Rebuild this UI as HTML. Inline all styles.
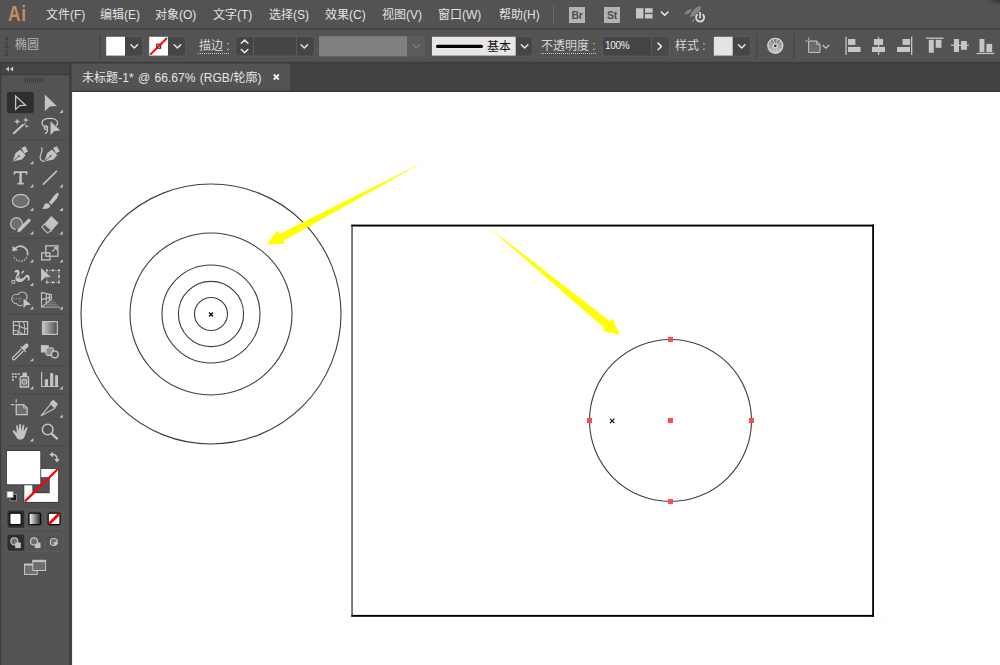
<!DOCTYPE html>
<html lang="zh">
<head>
<meta charset="utf-8">
<title>Adobe Illustrator</title>
<style>
*{box-sizing:border-box;margin:0;padding:0}
html,body{width:1000px;height:665px;overflow:hidden;background:#535353}
body{position:relative;font-family:"Liberation Sans","Noto Sans CJK SC",sans-serif;font-size:12px;color:#dedede}
.abs{position:absolute}
.t{position:absolute;z-index:5;white-space:nowrap;line-height:16px;height:16px}
#menubar{left:0;top:0;width:1000px;height:30px;background:#535353}
#ctrlbar{left:0;top:30px;width:1000px;height:33px;background:#535353;border-bottom:1px solid #3c3c3c}
#tabbar{left:72px;top:63px;width:928px;height:29px;background:#424242}
#tab{left:72px;top:63px;width:218px;height:29px;background:#535353}
#canvas{left:72px;top:92px;width:928px;height:573px;background:#fff}
#tools{left:0;top:63px;width:72px;height:602px;background:#535353}
#toolhead{left:0;top:63px;width:70px;height:12px;background:#454545}
.menu{top:7px;font-size:12px;color:#e2e2e2}
.lbl{top:38px;font-size:12px;color:#d6d6d6}
.dd{position:absolute;top:37px;height:19px;background:#464646;border-radius:0 2px 2px 0}
.fld{position:absolute;top:37px;height:19px;background:#454545}
.cj{display:inline-block;vertical-align:top;height:16px;overflow:hidden;font-family:"Liberation Sans","Noto Sans CJK SC",sans-serif}
</style>
</head>
<body>

<!-- ===== menu bar ===== -->
<div id="menubar" class="abs"></div>
<div class="t" style="left:8.2px;top:0;height:28px;line-height:28px;font-size:22.5px;font-weight:bold;letter-spacing:0.8px;color:#c88d61;transform:scaleX(0.77);transform-origin:0 0">Ai</div>
<div class="t menu" style="left:46px"><span class="cj" style="width:24px">文件</span>(F)</div>
<div class="t menu" style="left:100px"><span class="cj" style="width:24px">编辑</span>(E)</div>
<div class="t menu" style="left:155px"><span class="cj" style="width:24px">对象</span>(O)</div>
<div class="t menu" style="left:213px"><span class="cj" style="width:24px">文字</span>(T)</div>
<div class="t menu" style="left:269px"><span class="cj" style="width:24px">选择</span>(S)</div>
<div class="t menu" style="left:325px"><span class="cj" style="width:24px">效果</span>(C)</div>
<div class="t menu" style="left:382px"><span class="cj" style="width:24px">视图</span>(V)</div>
<div class="t menu" style="left:438px"><span class="cj" style="width:24px">窗口</span>(W)</div>
<div class="t menu" style="left:499px"><span class="cj" style="width:24px">帮助</span>(H)</div>
<div class="abs" style="left:553px;top:5px;width:1px;height:19px;background:#6a6a6a"></div>
<div class="abs" style="left:569px;top:7px;width:16px;height:16px;background:#b3b3b3;color:#4e4e4e;font-size:10.5px;font-weight:bold;letter-spacing:-0.3px;line-height:16px;text-align:center;z-index:5">Br</div>
<div class="abs" style="left:604px;top:7px;width:16px;height:16px;background:#b3b3b3;color:#4e4e4e;font-size:10.5px;font-weight:bold;letter-spacing:-0.3px;line-height:16px;text-align:center;z-index:5">St</div>

<!-- ===== control bar ===== -->
<div id="ctrlbar" class="abs"></div>
<div class="t" style="left:15px;top:37px;font-size:12px;color:#b4b4b4"><span class="cj" style="width:24px">椭圆</span></div>
<div class="t lbl" style="left:199px"><span class="cj" style="width:24px">描边</span> :</div>
<div class="t lbl" style="left:541px"><span class="cj" style="width:48px">不透明度</span> :</div>
<div class="t lbl" style="left:675px"><span class="cj" style="width:24px">样式</span> :</div>

<div class="t" style="left:487px;top:38.5px;font-size:12px;color:#111"><span class="cj" style="width:24px">基本</span></div>
<div class="t" style="left:605px;top:38px;font-size:10px;color:#f0f0f0;letter-spacing:-0.3px">100%</div>

<!-- ===== tab bar ===== -->
<div id="tabbar" class="abs"></div>
<div id="tab" class="abs"></div>
<div class="t" style="left:82px;top:70px;font-size:12px;color:#e6e6e6;letter-spacing:0.05px;word-spacing:0.9px"><span class="cj" style="width:36.15px">未标题</span>-1* @ 66.67% (RGB/</div>
<div class="t" style="left:233.4px;top:70px;font-size:12px;color:#e6e6e6"><span class="cj" style="width:24px">轮廓</span></div>
<div class="t" style="left:257.5px;top:70px;font-size:12px;color:#e6e6e6">)</div>

<!-- ===== canvas ===== -->
<div id="canvas" class="abs"></div>

<!-- ===== tools panel ===== -->
<div id="tools" class="abs"></div>
<div id="toolhead" class="abs"></div>

<!-- ===== master svg overlay (all vector art) ===== -->
<svg class="abs" style="left:0;top:0" width="1000" height="665" viewBox="0 0 1000 665">
<defs><radialGradient id="crn" cx="1" cy="0" r="1"><stop offset="0" stop-color="#363636"/><stop offset="0.55" stop-color="#454545" stop-opacity="0.8"/><stop offset="1" stop-color="#535353" stop-opacity="0"/></radialGradient></defs>
<rect x="982" y="0" width="18" height="7" fill="url(#crn)"/>
<g fill="none" stroke="#f1f1f1" stroke-width="0.8"><circle cx="872.3" cy="623" r="1.7"/><path d="M884.2,624 C884.4,622.2 885.4,621.4 886.8,621.6"/><path d="M882.6,613.4 L883.6,614.6"/></g>
<!-- canvas drawing -->
<g id="drawing">
  <!-- artboard rectangle -->
  <rect x="351.2" y="224.6" width="1.7" height="392.2" fill="#666"/>
  <rect x="351.4" y="224.6" width="522.6" height="1.9" fill="#000"/>
  <rect x="351.4" y="614.9" width="522.6" height="1.9" fill="#000"/>
  <rect x="872.2" y="224.6" width="1.8" height="392.2" fill="#000"/>
  <!-- concentric circles -->
  <g fill="none" stroke="#404040" stroke-width="1.12">
    <circle cx="211" cy="314" r="130"/>
    <circle cx="211" cy="314" r="81"/>
    <circle cx="211" cy="314" r="49"/>
    <circle cx="211" cy="314" r="32.6"/>
    <circle cx="211" cy="314" r="16.5"/>
    <circle cx="670.5" cy="420.5" r="81"/>
  </g>
  <!-- centre marks -->
  <path d="M209 312.5l4 4M213 312.5l-4 4" stroke="#000" stroke-width="1.15" fill="none"/>
  <path d="M610 418.6l4.4 4.4M614.4 418.6l-4.4 4.4" stroke="#111" stroke-width="1.1" fill="none"/>
  <!-- yellow arrows -->
  <polygon points="424,161.7 279.4,234.1 277.1,230.7 266.7,244.6 284.9,243.7 283.3,240.9" fill="#ffff00"/>
  <polygon points="488,226.7 609.5,321 612.5,318.8 619.7,334.8 602.5,330.7 604.5,328.3" fill="#ffff00"/>
  <!-- anchors -->
  <g fill="#ff4c4c" shape-rendering="crispEdges">
    <rect x="668" y="337" width="5" height="5"/>
    <rect x="668" y="499" width="5" height="5"/>
    <rect x="587" y="418" width="5" height="5"/>
    <rect x="749" y="418" width="5" height="5"/>
    <rect x="668" y="418" width="5" height="5"/>
  </g>
</g>
<!-- control bar widgets -->
<defs>
  <path id="chv" d="M-3.3,-1.7 L0,1.6 L3.3,-1.7" fill="none" stroke-width="1.5" stroke-linecap="round" stroke-linejoin="round"/>
</defs>
<g id="ctrl">
  <!-- grip -->
  <g fill="#3b3b3b">
    <rect x="5" y="37" width="3" height="1"/><rect x="5" y="39" width="3" height="1"/><rect x="5" y="41" width="3" height="1"/><rect x="5" y="43" width="3" height="1"/><rect x="5" y="45" width="3" height="1"/><rect x="5" y="47" width="3" height="1"/><rect x="5" y="49" width="3" height="1"/><rect x="5" y="51" width="3" height="1"/><rect x="5" y="53" width="3" height="1"/><rect x="5" y="55" width="3" height="1"/>
  </g>
  <rect x="99.1" y="34.5" width="1.6" height="24" fill="#484848"/>
  <!-- fill swatch -->
  <rect x="105.7" y="36.3" width="37.3" height="19.8" rx="3" fill="#464646" stroke="#5d5d5d" stroke-width="1"/>
  <rect x="106.2" y="36.8" width="18.8" height="18.8" fill="#fff"/>
  <use href="#chv" x="134.3" y="46.4" stroke="#e6e6e6"/>
  <!-- stroke swatch -->
  <rect x="148.7" y="36.3" width="37.3" height="19.8" rx="3" fill="#464646" stroke="#5d5d5d" stroke-width="1"/>
  <rect x="149.2" y="36.8" width="18.8" height="18.8" fill="#fff"/>
  <rect x="156.7" y="44.2" width="4" height="4" fill="none" stroke="#111" stroke-width="1"/>
  <path d="M150.2,54.6 L167,38" stroke="#ff0000" stroke-width="2" fill="none"/>
  <use href="#chv" x="177.4" y="46.4" stroke="#e6e6e6"/>
  <!-- dotted underline for stroke label -->
  <path d="M198,53.5 H230" stroke="#c8c8c8" stroke-width="1" stroke-dasharray="1 1" fill="none" shape-rendering="crispEdges"/>
  <!-- stroke weight -->
  <rect x="235.3" y="36.3" width="79" height="19.8" rx="3" fill="#454545" stroke="#5d5d5d" stroke-width="1"/>
  <rect x="253" y="36.8" width="1" height="18.8" fill="#5a5a5a"/>
  <rect x="296" y="36.8" width="1" height="18.8" fill="#5a5a5a"/>
  <use href="#chv" x="244.6" y="41.6" stroke="#e6e6e6" transform="rotate(180 244.6 41.6)"/>
  <use href="#chv" x="244.6" y="51.2" stroke="#e6e6e6"/>
  <use href="#chv" x="304.3" y="46.4" stroke="#e6e6e6"/>
  <!-- variable width profile (disabled) -->
  <rect x="407" y="36.3" width="18.3" height="20" rx="2" fill="#5b5b5b"/>
  <rect x="319" y="36.2" width="88" height="20.2" fill="#808080"/>
  <use href="#chv" x="416.4" y="46.4" stroke="#7c7c7c"/>
  <!-- brush definition -->
  <rect x="431.5" y="36.3" width="101.3" height="19.8" rx="3" fill="#464646" stroke="#5d5d5d" stroke-width="1"/>
  <rect x="432" y="36.8" width="83.7" height="18.8" fill="#e6e6e6"/>
  <path d="M437.6,46.4 H481.4" stroke="#000" stroke-width="3.2" stroke-linecap="round" fill="none"/>
  <use href="#chv" x="524.6" y="46.4" stroke="#e6e6e6"/>
  <!-- opacity -->
  <path d="M541,53.5 H597" stroke="#c8c8c8" stroke-width="1" stroke-dasharray="1 1" fill="none" shape-rendering="crispEdges"/>
  <rect x="602.3" y="36.3" width="67.2" height="19.8" rx="3" fill="#444444" stroke="#5d5d5d" stroke-width="1"/>
  <rect x="651" y="36.8" width="1" height="18.8" fill="#5a5a5a"/>
  <rect x="652" y="36.8" width="17" height="18.8" rx="2" fill="#494949"/>
  <use href="#chv" x="659.8" y="46.4" stroke="#e6e6e6" transform="rotate(-90 659.8 46.4)"/>
  <!-- style -->
  <rect x="713.4" y="36.3" width="37.3" height="19.8" rx="3" fill="#464646" stroke="#5d5d5d" stroke-width="1"/>
  <rect x="713.9" y="36.8" width="18.8" height="18.8" fill="#e4e4e4"/>
  <use href="#chv" x="741.7" y="46.4" stroke="#e6e6e6"/>
  <rect x="755.9" y="34" width="1.6" height="24.5" fill="#484848"/>
  <rect x="793.2" y="34" width="1.6" height="24.5" fill="#484848"/>
</g>
<!-- menubar icons -->
<g id="mbicons">
  <rect x="636" y="8.2" width="7.4" height="10.3" fill="#c6c6c6"/>
  <rect x="645" y="8.2" width="7.6" height="4.6" fill="#c6c6c6"/>
  <rect x="645" y="14.1" width="7.6" height="4.4" fill="#c6c6c6"/>
  <use href="#chv" x="664.7" y="13.7" stroke="#ececec"/>
  <!-- rocket (dim) -->
  <g fill="#848484">
    <path d="M701.2,5.8 Q692.8,7.4 689.8,16.9 Q700.4,16.4 701.2,5.8 Z"/>
    <path d="M692,8.9 Q686.2,9.2 684.4,14.5 Q690.2,14.4 692,8.9 Z"/>
    <path d="M694.6,18 Q692,19.8 691.8,22.7 Q694.8,21.6 694.6,18 Z"/>
  </g>
  <!-- power -->
  <circle cx="700.1" cy="17.5" r="5.6" fill="#535353"/>
  <path d="M697.61,14.31 A4.05,4.05 0 1 0 702.59,14.31" fill="none" stroke="#d4d4d4" stroke-width="1.9"/>
  <path d="M700.1,12.1 V18.3" stroke="#d4d4d4" stroke-width="1.8" fill="none"/>
</g>
<!-- control bar right icons -->
<defs>
  <linearGradient id="wheelg" gradientUnits="userSpaceOnUse" x1="0" y1="38.8" x2="0" y2="52.8"><stop offset="0" stop-color="#7e7e7e"/><stop offset="0.5" stop-color="#9a9a9a"/><stop offset="1" stop-color="#c2c2c2"/></linearGradient>
</defs>
<g id="ctrlright">
  <circle cx="775.3" cy="45.8" r="8.1" fill="#d8d8d8"/>
  <path d="M776.29,43.29L777.83,39.38A6.9,6.9 0 0 1 780.62,41.41L777.38,44.08ZM777.58,44.35L781.12,42.09A6.9,6.9 0 0 1 782.19,45.38L777.99,45.64ZM777.99,45.96L782.19,46.22A6.9,6.9 0 0 1 781.12,49.51L777.58,47.25ZM777.38,47.52L780.62,50.19A6.9,6.9 0 0 1 777.83,52.22L776.29,48.31ZM775.98,48.41L777.03,52.48A6.9,6.9 0 0 1 773.57,52.48L774.62,48.41ZM774.31,48.31L772.77,52.22A6.9,6.9 0 0 1 769.98,50.19L773.22,47.52ZM773.02,47.25L769.48,49.51A6.9,6.9 0 0 1 768.41,46.22L772.61,45.96ZM772.61,45.64L768.41,45.38A6.9,6.9 0 0 1 769.48,42.09L773.02,44.35ZM773.22,44.08L769.98,41.41A6.9,6.9 0 0 1 772.77,39.38L774.31,43.29ZM774.62,43.19L773.57,39.12A6.9,6.9 0 0 1 777.03,39.12L775.98,43.19Z" fill="url(#wheelg)"/>
  <circle cx="775.3" cy="45.8" r="1.35" fill="#363636"/>
  <!-- artboard -->
  <path d="M808.6,41 H816.6 L820,44.4 V52.4 H808.6 Z" fill="#6c6c6c" stroke="#c8c8c8" stroke-width="1"/>
  <path d="M816.6,41 V44.4 H820" fill="none" stroke="#c8c8c8" stroke-width="0.8"/>
  <path d="M808.8,37.6 V39.9 M805.3,41 H807.6" stroke="#c8c8c8" stroke-width="1" fill="none"/>
  <path d="M822.6,45 L825.9,48.2 L829.2,45" fill="none" stroke="#c8c8c8" stroke-width="1.2"/>
  <g fill="#c6c6c6">
    <!-- align left -->
    <rect x="845.4" y="36.8" width="1.3" height="18.2"/><rect x="848" y="39" width="7.4" height="5.9"/><rect x="848" y="46.9" width="12.6" height="5.1"/>
    <!-- align h-center -->
    <rect x="877.9" y="36.8" width="1.3" height="18.2"/><rect x="873.9" y="39" width="9.2" height="5.9"/><rect x="872" y="46.9" width="13" height="5.1"/>
    <!-- align right -->
    <rect x="911" y="36.8" width="1.3" height="18.2"/><rect x="902.5" y="39" width="7.5" height="5.9"/><rect x="897" y="46.9" width="13" height="5.1"/>
    <!-- align top -->
    <rect x="925.9" y="37.5" width="17.6" height="1.3"/><rect x="928.8" y="39.8" width="5" height="12.9"/><rect x="935.7" y="39.8" width="5.8" height="8"/>
    <!-- align v-center -->
    <rect x="950.9" y="44.6" width="17.9" height="1.3"/><rect x="953.9" y="39" width="5.1" height="13"/><rect x="961" y="41" width="5.9" height="8.8"/>
    <!-- align bottom -->
    <rect x="976.6" y="52.8" width="17.6" height="1.3"/><rect x="979.5" y="39" width="4.9" height="13"/><rect x="986.4" y="43.9" width="5.8" height="8.1"/>
  </g>
</g>
<path d="M273.8,74.5 L278.8,79.5 M278.8,74.5 L273.8,79.5" stroke="#f4f4f4" stroke-width="1.9" fill="none"/>
<rect x="72" y="90.6" width="928" height="1.3" fill="#3b3b3b"/>
<!-- tools panel -->
<g id="toolpanel">
  <rect x="0" y="61.8" width="1000" height="1.8" fill="#3c3c3c"/>
  <rect x="0" y="28.45" width="1000" height="1.25" fill="#3d3d3d"/>
  <rect x="0" y="63" width="1.2" height="602" fill="#3e3e3e"/>
  <rect x="69.2" y="63" width="1.9" height="602" fill="#3b3b3b"/><rect x="71.1" y="63" width="1" height="602" fill="#464646"/>
  <rect x="1.2" y="74" width="68" height="1.1" fill="#3a3a3a"/>
  <path d="M9,66.7 V71.4 L5.8,69.05 Z M13.1,66.7 V71.4 L9.9,69.05 Z" fill="#d2d2d2"/>
  <g fill="#3a3a3a"><rect x="25" y="78" width="1" height="4.2"/><rect x="27" y="78" width="1" height="4.2"/><rect x="29" y="78" width="1" height="4.2"/><rect x="31" y="78" width="1" height="4.2"/><rect x="33" y="78" width="1" height="4.2"/><rect x="35" y="78" width="1" height="4.2"/><rect x="37" y="78" width="1" height="4.2"/><rect x="39" y="78" width="1" height="4.2"/><rect x="41" y="78" width="1" height="4.2"/><rect x="43" y="78" width="1" height="4.2"/></g>
  <g fill="#494949"><rect x="6" y="139.5" width="58.5" height="1"/><rect x="6" y="237.8" width="58.5" height="1"/><rect x="6" y="313.4" width="58.5" height="1"/><rect x="6" y="365.1" width="58.5" height="1"/><rect x="6" y="393.5" width="58.5" height="1"/><rect x="6" y="445.1" width="58.5" height="1"/></g>
  <g fill="#c4c4c4"><path d="M29.9,164.2 H33.3 V160.79999999999998 Z"/><path d="M29.9,187.4 H33.3 V184.0 Z"/><path d="M59.4,187.4 H62.8 V184.0 Z"/><path d="M29.9,211 H33.3 V207.6 Z"/><path d="M59.4,211 H62.8 V207.6 Z"/><path d="M29.9,234.5 H33.3 V231.1 Z"/><path d="M59.4,234.5 H62.8 V231.1 Z"/><path d="M29.9,262.6 H33.3 V259.20000000000005 Z"/><path d="M59.4,262.6 H62.8 V259.20000000000005 Z"/><path d="M29.9,286 H33.3 V282.6 Z"/><path d="M29.9,309.6 H33.3 V306.20000000000005 Z"/><path d="M59.4,309.6 H62.8 V306.20000000000005 Z"/><path d="M29.9,361.3 H33.3 V357.90000000000003 Z"/><path d="M29.9,389.5 H33.3 V386.1 Z"/><path d="M59.4,389.5 H62.8 V386.1 Z"/><path d="M59.4,417.8 H62.8 V414.40000000000003 Z"/><path d="M29.9,441.5 H33.3 V438.1 Z"/><path d="M59.4,113 H62.8 V109.6 Z"/></g>

  <!-- selection (active) -->
  <rect x="6.4" y="91.3" width="28" height="22.4" rx="3.2" fill="#5a5a5a"/>
  <rect x="6.9" y="91.8" width="27" height="21.4" rx="2.8" fill="#2e2e2e"/>
  <path d="M15.6,96.1 V109.4 L19.9,105.6 L25.5,105.2 Z" fill="none" stroke="#c4c4c4" stroke-width="1.3" stroke-linejoin="miter"/>
  <!-- direct selection -->
  <path d="M44.8,94.5 V111.3 L49.8,106.4 L56.8,105.9 Z" fill="#c4c4c4"/>
  <!-- magic wand -->
  <path d="M13.3,133.7 L23.6,124.3" stroke="#c4c4c4" stroke-width="2.1" stroke-linecap="butt" fill="none"/>
  <path d="M17.2,118.3 L18,120.8 L20.5,121.6 L18,122.4 L17.2,124.9 L16.4,122.4 L13.9,121.6 L16.4,120.8 Z" fill="#c4c4c4"/>
  <path d="M25.8,117 L26.5,119.3 L28.8,120 L26.5,120.7 L25.8,123 L25.1,120.7 L22.8,120 L25.1,119.3 Z" fill="#c4c4c4"/>
  <path d="M25.6,124.8 L28.6,126.3 L25.6,127.8 Z" fill="#c4c4c4"/>
  <path d="M24.2,123.4 L25.4,124.6" stroke="#c4c4c4" stroke-width="1.2" fill="none"/>
  <!-- lasso -->
  <g fill="none" stroke="#c4c4c4" stroke-width="1.3">
    <path d="M47.5,127.3 C43.5,126.6 41.8,124.6 42,122.6 C42.4,119.6 46,118.3 49.9,118.3 C54,118.3 57.6,120 57.6,123 C57.6,124.2 57,125.2 56,126"/>
    <circle cx="45.9" cy="127.7" r="1.8"/>
    <path d="M47.3,129 C48,131 47,133 44.8,133.6"/>
  </g>
  <path d="M50.5,121.2 V134.9 L54.6,130.9 L60.3,130.4 Z" fill="#c4c4c4"/>

  <!-- pen -->
  <g id="pen">
    <path d="M12.5,161.6 L15.6,153 L20.3,149.6 L25.6,154.9 L22,159.4 Z" fill="#c4c4c4"/>
    <path d="M21.2,148.6 L24.7,146.1 L28.3,150.9 L24.8,153.3 Z" fill="#c4c4c4" transform="rotate(8 24.7 149.7)"/>
    <path d="M12.9,161.2 L18.8,156.2" stroke="#535353" stroke-width="0.9" fill="none"/>
    <circle cx="19" cy="156" r="0.9" fill="#535353"/>
  </g>
  <!-- curvature -->
  <use href="#pen" x="31.7" y="0"/>
  <path d="M41.2,147.3 C44.5,150.8 38.2,155.8 40.6,159.4 C41.4,160.7 43,161.4 44.4,161.3" fill="none" stroke="#c4c4c4" stroke-width="1.2"/>
  <!-- type -->
  <path d="M13.7,171.2 H27.4 V174.7 H26.2 L25.7,172.9 H21.8 V182.6 L23.9,183.2 V184.5 H17.4 V183.2 L19.4,182.6 V172.9 H15.4 L14.9,174.7 H13.7 Z" fill="#c4c4c4"/>
  <!-- line -->
  <path d="M42.9,184.6 L56.9,170.9" stroke="#c4c4c4" stroke-width="1.6" fill="none"/>
  <!-- ellipse -->
  <ellipse cx="20.65" cy="200.9" rx="8.3" ry="6.5" fill="#6e6e6e" stroke="#c4c4c4" stroke-width="1.2"/>
  <!-- brush -->
  <path d="M58.3,192.8 C56.8,192.8 55.2,194.2 53.8,196 L48.9,202.6 L51.4,204.8 L56.8,198.4 C58.3,196.4 58.9,194 58.3,192.8 Z" fill="#c4c4c4"/>
  <path d="M48.7,203.9 C47,202.6 45,203.2 44.3,205 C43.8,206.6 43,207.9 41.8,208.6 C45,209.4 48.3,208.7 50,206.7 C50.8,205.7 50.2,205 48.7,203.9 Z" fill="#c4c4c4"/>
  <!-- shaper -->
  <circle cx="16.5" cy="223.6" r="5.9" fill="#6e6e6e"/>
  <path d="M21.8,226.2 A5.9,5.9 0 1 0 15.8,229.5" fill="none" stroke="#c4c4c4" stroke-width="1.2"/>
  <path d="M28.8,218.2 L31.2,220.6 L20.4,231.4 L17.3,232.3 L18,229 Z" fill="#c4c4c4"/>
  <!-- eraser -->
  <path d="M51.3,216.1 L58.5,223 L52,230.2 L44.8,223.6 Z" fill="#c4c4c4"/>
  <path d="M44.4,224 L51.6,230.6 L47.3,232.9 L41.9,226.9 Z" fill="none" stroke="#c4c4c4" stroke-width="1.1"/>

  <!-- rotate -->
  <path d="M15.2,248.4 A7.3,7.3 0 0 1 27.4,255.4" fill="none" stroke="#c4c4c4" stroke-width="1.5"/>
  <path d="M26.8,257.2 A7.3,7.3 0 0 1 13.3,255.6" fill="none" stroke="#c4c4c4" stroke-width="1.4" stroke-dasharray="1.3 1.5"/>
  <path d="M12.5,246 V251.4 L18.2,250 Z" fill="#c4c4c4"/>
  <!-- scale -->
  <g fill="none" stroke="#c4c4c4" stroke-width="1.3">
    <rect x="45.8" y="245.8" width="12.1" height="10.4"/>
    <rect x="41.7" y="252.9" width="8.2" height="7"/>
    <path d="M52.2,251.5 L56.3,247.6"/>
  </g>
  <path d="M53.6,247 H57 V250.4 Z" fill="#c4c4c4"/>
  <!-- width tool -->
  <path d="M14.2,271.8 C15.2,269.4 18.4,269 19.4,271.4 C20.4,274 17.6,275.6 18.6,277.6 C19.6,279.6 23,278.6 24.6,276.4 C26.2,274.2 29.2,274.2 29.6,277 C29.8,278.4 29.6,279.8 29.6,280.6 L27.8,280.4 C27.8,279 28,277.6 27.2,277.2 C26,276.8 25.6,278.8 23.6,280.4 C21.2,282.4 17.2,282.8 15.8,280 C14.4,277.2 17.6,274.6 17,272.8 C16.6,271.8 15.6,272 15.4,272.8 Z" fill="#c4c4c4"/>
  <path d="M21.6,273.6 C22.2,272 23.2,271.2 24.2,271.2" fill="none" stroke="#c4c4c4" stroke-width="1.4"/>
  <rect x="12" y="280.4" width="2.8" height="2.8" fill="#535353" stroke="#c4c4c4" stroke-width="0.9"/>
  <circle cx="17.8" cy="277" r="1.4" fill="#535353" stroke="#c4c4c4" stroke-width="0.9"/>
  <!-- free transform -->
  <rect x="46.8" y="270.4" width="12.2" height="12" fill="#5c5c5c" stroke="#c4c4c4" stroke-width="1" stroke-dasharray="1 1"/>
  <g fill="#e0e0e0"><rect x="45.9" y="269.5" width="1.8" height="1.8"/><rect x="52" y="269.5" width="1.8" height="1.8"/><rect x="58.1" y="269.5" width="1.8" height="1.8"/><rect x="58.1" y="275.5" width="1.8" height="1.8"/><rect x="45.9" y="281.5" width="1.8" height="1.8"/><rect x="52" y="281.5" width="1.8" height="1.8"/><rect x="58.1" y="281.5" width="1.8" height="1.8"/></g>
  <path d="M41.1,267.9 V281.3 L45.1,277.3 L50.7,276.9 Z" fill="#c4c4c4"/>

  <!-- shape builder -->
  <g fill="#c4c4c4"><circle cx="16.5" cy="298.9" r="5.2"/><circle cx="22.3" cy="296.8" r="5.3"/><circle cx="20.2" cy="301.8" r="4.5"/></g>
  <g fill="#535353"><circle cx="16.5" cy="298.9" r="4.1"/><circle cx="22.3" cy="296.8" r="4.2"/><circle cx="20.2" cy="301.8" r="3.4"/></g>
  <path d="M20.3,296.6 A4.6,4.6 0 0 1 18.6,302.8" fill="#6e6e6e" stroke="#8f8f8f" stroke-width="0.7" stroke-dasharray="1 0.8"/>
  <path d="M13.6,298.7 H20" stroke="#a8a8a8" stroke-width="0.9" stroke-dasharray="1.2 1" fill="none"/>
  <path d="M22.7,296.9 V309.4 L26.7,306 L32.6,305.6 Z" fill="#535353"/>
  <path d="M23.5,298.5 V307.9 L26.3,305.3 L31.1,304.8 Z" fill="#c4c4c4"/>
  <!-- perspective grid -->
  <g fill="none" stroke="#c4c4c4" stroke-width="1.1">
    <path d="M41.5,292.2 V307.6 M41.5,292.4 L51.4,294.7 V299.2 L41.5,307.2 M46.3,293.5 V303.2 M49.3,294.2 V300.8 M41.5,299.6 L51.4,297"/>
  </g>
  <g fill="none" stroke-width="1"><path d="M50.5,300.9 H54.4" stroke="#7d7d7d"/><path d="M48,302.9 H56" stroke="#858585"/><path d="M45.6,304.8 H57.6" stroke="#909090"/><path d="M41.5,307.1 H59.9" stroke="#b4b4b4"/></g>

  <!-- mesh -->
  <g fill="none" stroke="#c4c4c4">
    <rect x="13.4" y="321.6" width="14.2" height="12.8" stroke-width="1.2"/>
    <path d="M13.4,325.6 C17,324 20,326.8 23.4,328 C25,328.6 26.4,328.8 27.6,328.6 M13.4,331 C16,329.4 18.6,331.2 21,333 C21.8,333.6 22.4,334 22.8,334.4 M18.4,321.6 C20.4,325 19.6,329.8 17.4,334.4 M23.4,321.6 C25.2,325.6 25,330 24.2,334.4" stroke-width="1.05"/>
  </g>
  <!-- gradient -->
  <defs><linearGradient id="gtool" x1="0" y1="0" x2="1" y2="0"><stop offset="0" stop-color="#cbcbcb"/><stop offset="1" stop-color="#4c4c4c"/></linearGradient>
  <linearGradient id="gbtn" x1="0" y1="0" x2="1" y2="0"><stop offset="0" stop-color="#ffffff"/><stop offset="1" stop-color="#2a2222"/></linearGradient></defs>
  <rect x="42.5" y="321.6" width="14.8" height="12.8" fill="url(#gtool)" stroke="#c4c4c4" stroke-width="1.2"/>
  <!-- eyedropper -->
  <path d="M21.4,349 L13.2,357 C12.4,357.8 12.2,358.8 12.8,359.4 C13.4,360 14.4,359.8 15.2,359 L23.4,351" fill="none" stroke="#c4c4c4" stroke-width="1.2"/>
  <path d="M20.2,347 L25.4,352.2 L26.4,351.2 L24.9,349.7 L27.6,347.4 C28.8,346.2 28.8,344.8 28,344 C27.2,343.2 25.8,343.2 24.6,344.4 L22.3,347.1 L21.2,346 Z" fill="#c4c4c4"/>
  <!-- blend -->
  <rect x="40.9" y="345.1" width="7.9" height="7.4" fill="#c4c4c4"/>
  <rect x="46" y="347.7" width="7.6" height="7.7" rx="2.2" fill="#8c8c8c" stroke="#c4c4c4" stroke-width="1.1"/>
  <circle cx="54.8" cy="354.5" r="3.4" fill="#535353" stroke="#c4c4c4" stroke-width="1.4"/>

  <!-- symbol sprayer -->
  <g fill="#c4c4c4"><rect x="12" y="373.2" width="1.8" height="1.8"/><rect x="14.9" y="373.2" width="1.8" height="1.8"/><rect x="17.8" y="373.2" width="1.8" height="1.8"/><rect x="12" y="376" width="1.8" height="1.8"/><rect x="14.9" y="376" width="1.8" height="1.8"/><rect x="12" y="379" width="1.8" height="1.8"/>
  <rect x="22.5" y="372.6" width="4.4" height="3.6"/></g>
  <path d="M20.2,387 V378 C20.2,377 21,376.4 22,376.4 H26.8 C27.8,376.4 28.6,377 28.6,378 V387 Z" fill="#6e6e6e" stroke="#c4c4c4" stroke-width="1.3"/>
  <circle cx="24.4" cy="381.8" r="2.4" fill="none" stroke="#c4c4c4" stroke-width="1.1"/>
  <circle cx="24.4" cy="381.8" r="0.8" fill="#c4c4c4"/>
  <!-- graph -->
  <path d="M41.6,372.1 V386.5 H58.7" fill="none" stroke="#c4c4c4" stroke-width="1.2"/>
  <g fill="#c4c4c4"><rect x="44.8" y="379.2" width="3.2" height="7"/><rect x="50.1" y="373.1" width="3.2" height="13.1"/><rect x="55.1" y="375.2" width="2.9" height="11"/></g>

  <!-- artboard -->
  <path d="M16.2,404.6 H23.6 L27.1,408 V414.6 H16.2 Z" fill="#6e6e6e" stroke="#c4c4c4" stroke-width="1.3"/>
  <path d="M23.6,404.6 V408 H27.1" fill="none" stroke="#c4c4c4" stroke-width="0.9"/>
  <path d="M16.2,399.3 V402.6 M10.8,404.6 H14.4" stroke="#c4c4c4" stroke-width="1.2" fill="none"/>
  <!-- slice -->
  <path d="M41.2,415.7 L50.8,403.8 L55,408.2 Z" fill="none" stroke="#c4c4c4" stroke-width="1.1" stroke-linejoin="round"/>
    <path d="M49.9,402.8 L53.2,399.7 L58,404.1 L55.3,408 Z" fill="#c4c4c4"/>
  <!-- hand -->
  <path d="M17.2,438.4 C16,436.6 14.2,433.6 12.8,431.6 C12.2,430.6 13.4,429.8 14.4,430.6 L16.8,433 L16.2,426.2 C16.1,425 17.7,424.8 17.9,426 L18.8,431 L19.2,424.6 C19.3,423.4 20.9,423.4 21,424.6 L21.2,431 L22.6,425.4 C22.9,424.3 24.4,424.6 24.3,425.8 L23.6,431.6 L25.8,427.8 C26.4,426.8 27.8,427.4 27.4,428.6 C26.4,431.4 25.6,434 24.8,436 C24.2,437.8 23,439.4 20.8,439.5 C19.2,439.6 18,439.4 17.2,438.4 Z" fill="#c4c4c4"/>
  <!-- zoom -->
  <circle cx="47.7" cy="429.5" r="5.3" fill="none" stroke="#c4c4c4" stroke-width="1.5"/>
  <path d="M51.6,433.7 L57,438.6" stroke="#c4c4c4" stroke-width="2.3" stroke-linecap="round" fill="none"/>

  <!-- fill / stroke -->
  <rect x="23.4" y="468" width="35.6" height="34.8" fill="#3a3a3a"/>
  <rect x="24.3" y="468.9" width="33.8" height="33" fill="#fff"/>
  <rect x="32.4" y="477.2" width="17.3" height="16" fill="#3a3a3a"/>
  <rect x="33.3" y="478.1" width="15.5" height="14.2" fill="#535353"/>
  <path d="M24.9,501.4 L57.6,469.3" stroke="#ff0000" stroke-width="2.2" fill="none"/>
  <rect x="6" y="450.1" width="35.2" height="35.2" fill="#3a3a3a"/>
  <rect x="6.9" y="451" width="33.4" height="33.3" fill="#fff"/>
  <!-- swap -->
  <path d="M52.4,454.6 C55.4,454.4 57,456 57,459" fill="none" stroke="#c4c4c4" stroke-width="1.5"/>
  <path d="M49.4,454.6 L53,451.8 V457.4 Z M57,462.6 L54.2,459 H59.8 Z" fill="#c4c4c4"/>
  <!-- default -->
  <rect x="10.2" y="494.6" width="6.2" height="6.2" fill="#1a1a1a" stroke="#9a9a9a" stroke-width="0.8"/>
  <rect x="7" y="491.4" width="6.2" height="6.2" fill="#fff" stroke="#8a8a8a" stroke-width="0.8"/>

  <!-- color / gradient / none -->
  <rect x="6.9" y="509.9" width="56" height="18.4" rx="2.5" fill="#535353" stroke="#5f5f5f" stroke-width="1"/>
  <path d="M9.4,510.4 H24.2 V527.8 H9.4 A2,2 0 0 1 7.4,525.8 V512.4 A2,2 0 0 1 9.4,510.4 Z" fill="#2e2e2e"/>
  <rect x="25.9" y="510.4" width="1" height="17.4" fill="#5f5f5f"/><rect x="44.6" y="510.4" width="1" height="17.4" fill="#5f5f5f"/>
  <rect x="9.8" y="513.2" width="11.4" height="11.4" rx="1.6" fill="#fff" stroke="#0a0a0a" stroke-width="1.2"/>
  <rect x="29" y="513.2" width="11.6" height="11.4" rx="1" fill="url(#gbtn)" stroke="#0a0a0a" stroke-width="1.2"/>
  <rect x="48.2" y="513.2" width="11.8" height="11.4" rx="1" fill="#fff" stroke="#0a0a0a" stroke-width="1.2"/>
  <path d="M49.4,523.6 L58.8,514.2" stroke="#f00" stroke-width="2.8" fill="none"/>
  <!-- draw modes -->
  <rect x="6.9" y="533.9" width="56" height="17.3" rx="2.5" fill="#535353" stroke="#5f5f5f" stroke-width="1"/>
  <path d="M9.4,534.4 H24.2 V550.7 H9.4 A2,2 0 0 1 7.4,548.7 V536.4 A2,2 0 0 1 9.4,534.4 Z" fill="#2e2e2e"/>
  <rect x="25.9" y="534.4" width="1" height="16.3" fill="#5f5f5f"/><rect x="44.6" y="534.4" width="1" height="16.3" fill="#5f5f5f"/>
  <circle cx="14.3" cy="541.4" r="3.5" fill="#6e6e6e" stroke="#c4c4c4" stroke-width="1.2"/><rect x="15.2" y="542.5" width="5.6" height="5.6" fill="#c4c4c4"/>
  <rect x="34.9" y="542.5" width="5.6" height="5.6" fill="#c4c4c4"/><circle cx="34" cy="541.4" r="3.5" fill="#6e6e6e" stroke="#c4c4c4" stroke-width="1.2"/>
  <circle cx="53.8" cy="542" r="3.5" fill="#6e6e6e" stroke="#c4c4c4" stroke-width="1.2"/><path d="M53.8,542 H57.3 A3.5,3.5 0 0 1 53.8,545.5 Z" fill="#c4c4c4"/>
  <!-- screen mode -->
  <rect x="24.5" y="564" width="12.8" height="10.4" fill="#6e6e6e" stroke="#c4c4c4" stroke-width="1"/><rect x="24.5" y="564" width="12.8" height="1.6" fill="#c4c4c4"/>
  <rect x="32.8" y="560.3" width="12.8" height="10.2" fill="#6e6e6e" stroke="#c4c4c4" stroke-width="1"/><rect x="32.8" y="560.3" width="12.8" height="1.8" fill="#c4c4c4"/>
</g>
<!--ART-->

</svg>

</body>
</html>
